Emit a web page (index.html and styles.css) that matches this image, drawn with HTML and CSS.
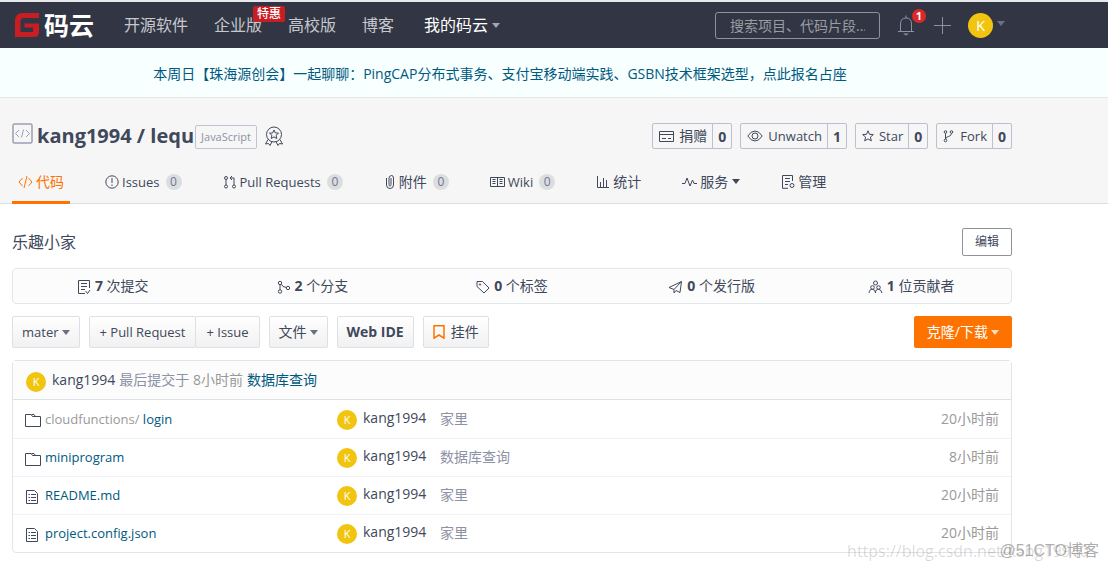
FILE: index.html
```html
<!DOCTYPE html>
<html lang="zh-CN">
<head>
<meta charset="utf-8">
<title>kang1994/lequ - 码云</title>
<link rel="stylesheet" href="styles.css">
</head>
<body>
<svg class="sprite" width="0" height="0" aria-hidden="true">
  <symbol id="folder" viewBox="0 0 16 16"><path d="M.5 14.500V2.500H6l1.500 2h8v10zM6.500 2.500H9l1.500 2"/></symbol>
  <symbol id="file" viewBox="0 0 14 16"><path d="M1.500 1.500h8l3 3v10h-11zM6 5.500h5M6 8.500h5M6 11.500h5M3.500 5.500h1.500M3.500 8.500h1.500M3.500 11.500h1.500"/></symbol>
</svg>

<header class="topbar">
  <div class="topbar-inner">
    <a class="logo" href="#" aria-label="码云">
      <svg width="24" height="24" viewBox="0 0 24 24"><path d="M24 0v5H9Q5.500 5 5.500 9v10H18v-4.500H9.500v-4H24V19q0 5-5 5H0V8q0-8 8-8z" fill="#c71d23"/></svg>
      <span>码云</span>
    </a>
    <nav class="mainnav">
      <a href="#">开源软件</a>
      <a href="#" class="promo">企业版<span class="promo-tag">特惠</span></a>
      <a href="#">高校版</a>
      <a href="#">博客</a>
      <a href="#" class="mine">我的码云<i class="caret"></i></a>
    </nav>
    <div class="tools">
      <input class="search" type="text" placeholder="搜索项目、代码片段..." aria-label="搜索">
      <button class="bell" aria-label="通知"><svg width="18" height="22" viewBox="0 0 18 22"><path d="M1 17.500h16M3.500 17v-7q0-6 5.500-6t5.500 6v7M9 4V1.500"/><path d="M6 19.500h6l-3 2z" fill="#8c92a4" stroke="none"/></svg><span class="bell-count">1</span></button>
      <button class="plus" aria-label="新建"><svg width="18" height="18" viewBox="0 0 18 18"><path d="M9.500 1v17M1 9.500h17"/></svg></button>
      <button class="user" aria-label="用户"><span class="avatar avatar-lg">K</span><i class="caret"></i></button>
    </div>
  </div>
</header>

<div class="notice"><a href="#">本周日【珠海源创会】一起聊聊：PingCAP分布式事务、支付宝移动端实践、GSBN技术框架选型，点此报名占座</a></div>

<section class="repo-head">
  <div class="container">
    <div class="title-row">
      <svg class="repo-icon" width="21" height="21" viewBox="0 0 21 21"><rect x="1" y="1" width="19" height="19" rx="1.500" stroke-width="1.500"/><path d="M7 7l-3.500 3.500L7 14M14 7l3.500 3.500L14 14M11.500 6.500l-2 8"/></svg>
      <h1><a href="#">kang1994</a> / <a href="#">lequ</a></h1>
      <a class="lang" href="#">JavaScript</a>
      <svg class="icon medal" width="20" height="20" viewBox="0 0 20 20"><circle cx="10" cy="8.500" r="7.500"/><path d="M10 4l1.300 2.900 3.200.3-2.400 2.100.7 3.200L10 10.900l-2.800 1.600.7-3.200-2.400-2.100 3.200-.3zM4 13.500l-2.500 4.500 3-.5 1.500 2 2-4M16 13.500l2.500 4.500-3-.5-1.500 2-2-4"/></svg>
      <div class="actions">
        <span class="action"><button><svg class="icon" width="15" height="14" viewBox="0 0 15 14"><path d="M.5 2.500h14v10H.500zM.5 5.500h14M3 9.500h4M9 9.500h3"/></svg>捐赠</button><a href="#">0</a></span>
        <span class="action latin"><button><svg class="icon" width="16" height="14" viewBox="0 0 16 14"><path d="M.8 7Q4 2 8 2t7.200 5Q12 12 8 12T.8 7z"/><circle cx="8" cy="7" r="3"/></svg>Unwatch</button><a href="#">1</a></span>
        <span class="action latin"><button><svg class="icon" width="12" height="14" viewBox="0 0 12 14"><path d="M6 1.800l1.500 3.500 3.800.3-2.900 2.500.9 3.800L6 9.900l-3.300 2 .9-3.800L.7 5.600l3.800-.3z"/></svg>Star</button><a href="#">0</a></span>
        <span class="action latin"><button><svg class="icon" width="12" height="14" viewBox="0 0 12 14"><circle cx="2.500" cy="3" r="1.300"/><circle cx="2.500" cy="11.500" r="1.300"/><circle cx="8.500" cy="3" r="1.300"/><path d="M2.500 4.500V10Q3 8 5.500 7.500T8.500 4.500"/></svg>Fork</button><a href="#">0</a></span>
      </div>
    </div>
    <nav class="tabs">
      <a class="active" href="#"><svg class="icon" width="15" height="14" viewBox="0 0 15 14"><path d="M4.500 3L1 7l3.500 4M10.500 3L14 7l-3.500 4M9 1L6 13"/></svg>代码</a>
      <a class="latin" href="#"><svg class="icon" width="14" height="14" viewBox="0 0 14 14"><circle cx="7" cy="7" r="6.200"/><path d="M7 3v5M7 9.500V11"/></svg>Issues<b class="pill">0</b></a>
      <a class="latin" href="#"><svg class="icon" width="14" height="14" viewBox="0 0 14 14"><circle cx="3" cy="3" r="1.500"/><circle cx="3" cy="11.500" r="1.500"/><circle cx="11" cy="11.500" r="1.500"/><path d="M3 4.500V10M11 10V3H7M9 1L7 3l2 2"/></svg>Pull Requests<b class="pill">0</b></a>
      <a href="#"><svg class="icon" width="12" height="14" viewBox="0 0 12 14"><path d="M2.500 3v7q0 3.500 3.500 3.500T9.500 10V3q0-2.500-2-2.500T5 3v6.500q0 1.500 1 1.500t1-1.500V3"/></svg>附件<b class="pill">0</b></a>
      <a class="latin" href="#"><svg class="icon" width="15" height="14" viewBox="0 0 15 14"><path d="M.5 2.500h14v9H.500zM7.500 2.500v9M2.500 4.500h3M2.500 6.500h3M2.500 8.500h3M9.500 4.500h3M9.500 6.500h3M9.500 8.500h3"/></svg>Wiki<b class="pill">0</b></a>
      <a href="#"><svg class="icon" width="14" height="14" viewBox="0 0 14 14"><path d="M1.500 1v11.500H13M4.500 12V7M7.500 12V3M10.500 12V5"/></svg>统计</a>
      <a href="#"><svg class="icon" width="15" height="14" viewBox="0 0 15 14"><path d="M0 8.500h3L5 3l3 8 2.500-6L12 8.500h3"/></svg>服务<i class="caret"></i></a>
      <a href="#"><svg class="icon" width="14" height="14" viewBox="0 0 14 14"><path d="M11.500 6V.500H1.500v12.800H7M4 3.500h5M4 6.500h5M4 9.500h3"/><circle cx="11" cy="10.500" r="2"/></svg>管理</a>
    </nav>
  </div>
</section>

<main class="container">
  <div class="desc"><p>乐趣小家</p><button class="edit">编辑</button></div>
  <div class="stats">
    <a href="#"><svg class="icon" width="14" height="14" viewBox="0 0 14 14"><path d="M12.500 8V.500h-11v13H8M4 3.500h6M4 6.500h6M4 9.500h4M8.500 11l2 2.500L13 10"/></svg><b>7</b> 次提交</a>
    <a href="#"><svg class="icon" width="14" height="14" viewBox="0 0 14 14"><circle cx="3" cy="3" r="1.700"/><circle cx="3" cy="11.500" r="1.700"/><circle cx="11" cy="8" r="1.700"/><path d="M3 4.700v5.100M4.500 4.300L6 6.500l3.500 1"/></svg><b>2</b> 个分支</a>
    <a href="#"><svg class="icon" width="14" height="14" viewBox="0 0 14 14"><path d="M1 1.500h5.500l6.500 6.500-5 5-7-6.500z"/><circle cx="4" cy="4.500" r=".7"/></svg><b>0</b> 个标签</a>
    <a href="#"><svg class="icon" width="15" height="14" viewBox="0 0 15 14"><path d="M1 7.500L13.500 1.500l-1.500 11-4-2-2 2.500V9.500zM6 9.500l7.500-8"/></svg><b>0</b> 个发行版</a>
    <a href="#"><svg class="icon" width="15" height="14" viewBox="0 0 15 14"><circle cx="7.500" cy="3" r="2"/><circle cx="4.500" cy="7.500" r="1.800"/><circle cx="10.500" cy="7.500" r="1.800"/><path d="M1 13q.5-4 3.500-3.700T7.500 13q0-4 3-3.700T14 13"/></svg><b>1</b> 位贡献者</a>
  </div>
  <div class="toolbar">
    <button class="btn latin">mater<i class="caret"></i></button>
    <div class="btn-group latin"><button class="btn">+ Pull Request</button><button class="btn">+ Issue</button></div>
    <button class="btn">文件<i class="caret"></i></button>
    <button class="btn strong">Web IDE</button>
    <button class="btn"><svg class="icon mark" width="12" height="14" viewBox="0 0 12 14"><path d="M1 .8h10v12.400L6 10l-5 3.200z"/></svg>挂件</button>
    <button class="btn primary">克隆/下载<i class="caret"></i></button>
  </div>

  <div class="files">
    <div class="last-commit"><span class="avatar">K</span><a class="author" href="#">kang1994</a><span class="muted">最后提交于 <span class="time">8小时前</span></span><a href="#">数据库查询</a></div>
    <table>
      <tr><td class="name"><svg class="icon" width="16" height="16"><use href="#folder"/></svg><a href="#"><span class="time">cloudfunctions/</span> login</a></td><td class="by"><span class="avatar">K</span><a class="author" href="#">kang1994</a></td><td class="muted">家里</td><td class="time">20小时前</td></tr>
      <tr><td class="name"><svg class="icon" width="16" height="16"><use href="#folder"/></svg><a href="#">miniprogram</a></td><td class="by"><span class="avatar">K</span><a class="author" href="#">kang1994</a></td><td class="muted">数据库查询</td><td class="time">8小时前</td></tr>
      <tr><td class="name"><svg class="icon doc" width="14" height="16"><use href="#file"/></svg><a href="#">README.md</a></td><td class="by"><span class="avatar">K</span><a class="author" href="#">kang1994</a></td><td class="muted">家里</td><td class="time">20小时前</td></tr>
      <tr><td class="name"><svg class="icon doc" width="14" height="16"><use href="#file"/></svg><a href="#">project.config.json</a></td><td class="by"><span class="avatar">K</span><a class="author" href="#">kang1994</a></td><td class="muted">家里</td><td class="time">20小时前</td></tr>
    </table>
  </div>
</main>
<div class="watermark source">https://blog.csdn.net/kang19940</div>
<div class="watermark host">@51CTO博客</div>
</body>
</html>
```
FILE: styles.css
```css
* { box-sizing: border-box; }
body {
  margin: 0;
  position: relative;
  min-height: 100vh;
  background: #fff;
  color: #40485b;
  font: 14px/20px "Open Sans", "Noto Sans CJK SC", sans-serif;
}
a { color: #005980; text-decoration: none; }
button, input { font: inherit; color: inherit; }
button { cursor: pointer; white-space: nowrap; }
h1, p { margin: 0; }
svg { fill: none; stroke: currentColor; flex: none; }
.sprite { position: absolute; }
.icon { vertical-align: middle; }
.latin { font-size: 13px; }
.container { max-width: 1000px; margin: 0 12px; }
.caret {
  display: inline-block;
  margin-left: 4px;
  border: 4px solid transparent;
  border-top: 5px solid currentColor;
  border-bottom: 0;
  flex: none;
}
.avatar {
  display: inline-flex;
  align-items: center;
  justify-content: center;
  width: 20px;
  height: 20px;
  border-radius: 50%;
  background: #f1c40f;
  color: #fff;
  font-size: 11px;
  flex: none;
}
.avatar-lg { width: 25px; height: 25px; font-size: 15px; }

/* Top navigation */
.topbar { background: #323644; border-top: 2px solid #e6e8ec; }
.topbar-inner {
  display: flex;
  align-items: center;
  max-width: 1005px;
  height: 46px;
  padding-left: 15px;
}
.logo { display: flex; align-items: center; gap: 5px; color: #fff; font-size: 25px; font-weight: 700; line-height: 30px; }
.logo svg { stroke: none; }
.mainnav { display: flex; gap: 26px; margin-left: 30px; font-size: 16px; white-space: nowrap; }
.mainnav a { color: #c7c8cc; }
.mainnav .mine { display: flex; align-items: center; margin-left: 4px; color: #fff; }
.mine .caret { color: #a4a7b0; }
.promo { position: relative; }
.promo-tag {
  position: absolute;
  top: -9px;
  left: 39px;
  padding: 0 4px;
  border-radius: 2px;
  background: #c71d23;
  color: #fff;
  font-size: 12px;
  font-weight: 500;
  line-height: 16px;
}
.tools { display: flex; align-items: center; margin-left: auto; color: #8c92a4; }
.tools button { display: flex; align-items: center; padding: 0; border: 0; background: none; }
.search {
  width: 165px;
  height: 27px;
  padding: 0 14px;
  border: 1px solid #8c92a4;
  border-radius: 3px;
  background: transparent;
}
.search::placeholder { color: #9a9ca3; opacity: 1; }
.tools .bell { position: relative; margin-left: 17px; }
.bell-count {
  position: absolute;
  top: -5px;
  left: 15px;
  width: 14px;
  height: 14px;
  border-radius: 50%;
  background: #db2828;
  color: #fff;
  font-size: 11px;
  font-weight: 700;
  line-height: 14px;
}
.tools .plus { margin-left: 18px; }
.tools .user { margin-left: 17px; }
.user .caret { color: #6d7283; margin-bottom: 3px; }

.notice {
  padding: 16px 0 13px;
  border-bottom: 1px solid #e3e7ea;
  background: #f7ffff;
}
.notice a { display: block; max-width: 1000px; text-align: center; }

/* Repository heading */
.repo-head { background: #f6f6f6; border-bottom: 1px solid #dcdddf; }
.title-row { display: flex; align-items: center; padding-top: 23px; height: 53px; }
.repo-icon { color: #9aa0b2; margin-bottom: 5px; }
.title-row h1 { margin-left: 4px; font-size: 20px; line-height: 28px; }
.title-row h1 a { color: inherit; }
.lang {
  margin: 2px 7px 0 1px;
  padding: 0 5px;
  border: 1px solid #c0c4d0;
  border-radius: 2px;
  color: #8c92a4;
  font-size: 11px;
  line-height: 22px;
}
.actions { display: flex; gap: 8px; margin-left: auto; }
.action { display: flex; height: 26px; border: 1px solid #bdc1cf; border-radius: 2px; }
.action button { display: flex; align-items: center; gap: 5px; padding: 0 5px 0 6px; border: 0; background: none; }
.action a { padding: 0 5px; border-left: 1px solid #bdc1cf; color: inherit; font-size: 14px; font-weight: 700; line-height: 25px; }
.tabs { display: flex; gap: 29px; margin-top: 10px; margin-bottom: -1px; }
.tabs a {
  display: flex;
  align-items: center;
  gap: 3px;
  height: 43px;
  padding: 1px 6px 0;
  border-bottom: 3px solid transparent;
  color: inherit;
  white-space: nowrap;
}
.tabs .active { border-color: #fe7300; color: #fe7300; }
.pill {
  min-width: 16px;
  margin-left: 3px;
  border-radius: 8px;
  background: #dcdddf;
  color: #6d7896;
  font-size: 12px;
  font-weight: 400;
  line-height: 16px;
  text-align: center;
}
.tabs .caret { margin-left: 1px; }

/* Summary */
.desc { display: flex; align-items: center; justify-content: space-between; padding: 24px 0 12px; font-size: 16px; }
.edit { height: 28px; padding: 0 12px; border: 1px solid #909399; border-radius: 2px; background: #fff; font-size: 12px; }
.stats {
  display: grid;
  grid-template-columns: repeat(5, 1fr);
  border: 1px solid #e3e8ec;
  border-radius: 4px;
  background: #fcfcfc;
}
.stats a { padding: 7px 0; color: inherit; text-align: center; }
.stats .icon { margin-right: 4px; }
.toolbar { display: flex; gap: 9px; margin: 12px 0; }
.btn {
  display: flex;
  align-items: center;
  height: 32px;
  padding: 0 9px;
  border: 1px solid #dce1e6;
  border-radius: 2px;
  background: linear-gradient(#fff, #f1f1f1);
}
.btn .caret { margin-left: 3px; color: #6a7080; }
.btn .icon { margin-right: 6px; }
.btn .mark { color: #fe7300; stroke-width: 1.5; }
.btn-group { display: flex; }
.btn-group .btn { padding: 0 10px; }
.btn-group .btn + .btn { margin-left: -1px; }
.strong { font-weight: 700; }
.btn.primary { margin-left: auto; padding: 0 13px; border: 0; background: #fe7300; color: #fff; }
.primary .caret { color: #ffe0c4; }

/* File list */
.files { border: 1px solid #e0e5e9; border-radius: 4px; }
.last-commit {
  display: flex;
  align-items: center;
  gap: 4px;
  height: 39px;
  padding-left: 13px;
  border-bottom: 1px solid #dce1e6;
  background: #fcfcfc;
}
.last-commit .avatar { margin: 3px 2px 0 0; }
.author { color: #40485b; }
.muted { color: #8c92a4; }
.time { color: #999; }
table { width: 100%; border-collapse: collapse; table-layout: fixed; }
td { height: 38px; padding: 0; border-top: 1px solid #f0f2f5; white-space: nowrap; }
tr:first-child td { border-top: 0; }
.name { width: 324px; padding-left: 12px; font-size: 13px; }
.name .icon { margin-right: 4px; }
.name .doc { margin-right: 6px; }
.by { width: 103px; }
.by .avatar { margin: 2px 6px 0 0; vertical-align: middle; }
td.time { padding-right: 12px; text-align: right; }

.watermark { position: absolute; white-space: nowrap; pointer-events: none; }
.source { right: 19px; bottom: 8px; color: rgba(0, 0, 0, .16); font: 16px/20px "Open Sans", sans-serif; }
.host { right: 9px; bottom: 8px; color: rgba(120, 120, 120, .6); font: 16px/20px "Liberation Sans", "Noto Sans CJK SC", sans-serif; }
```
